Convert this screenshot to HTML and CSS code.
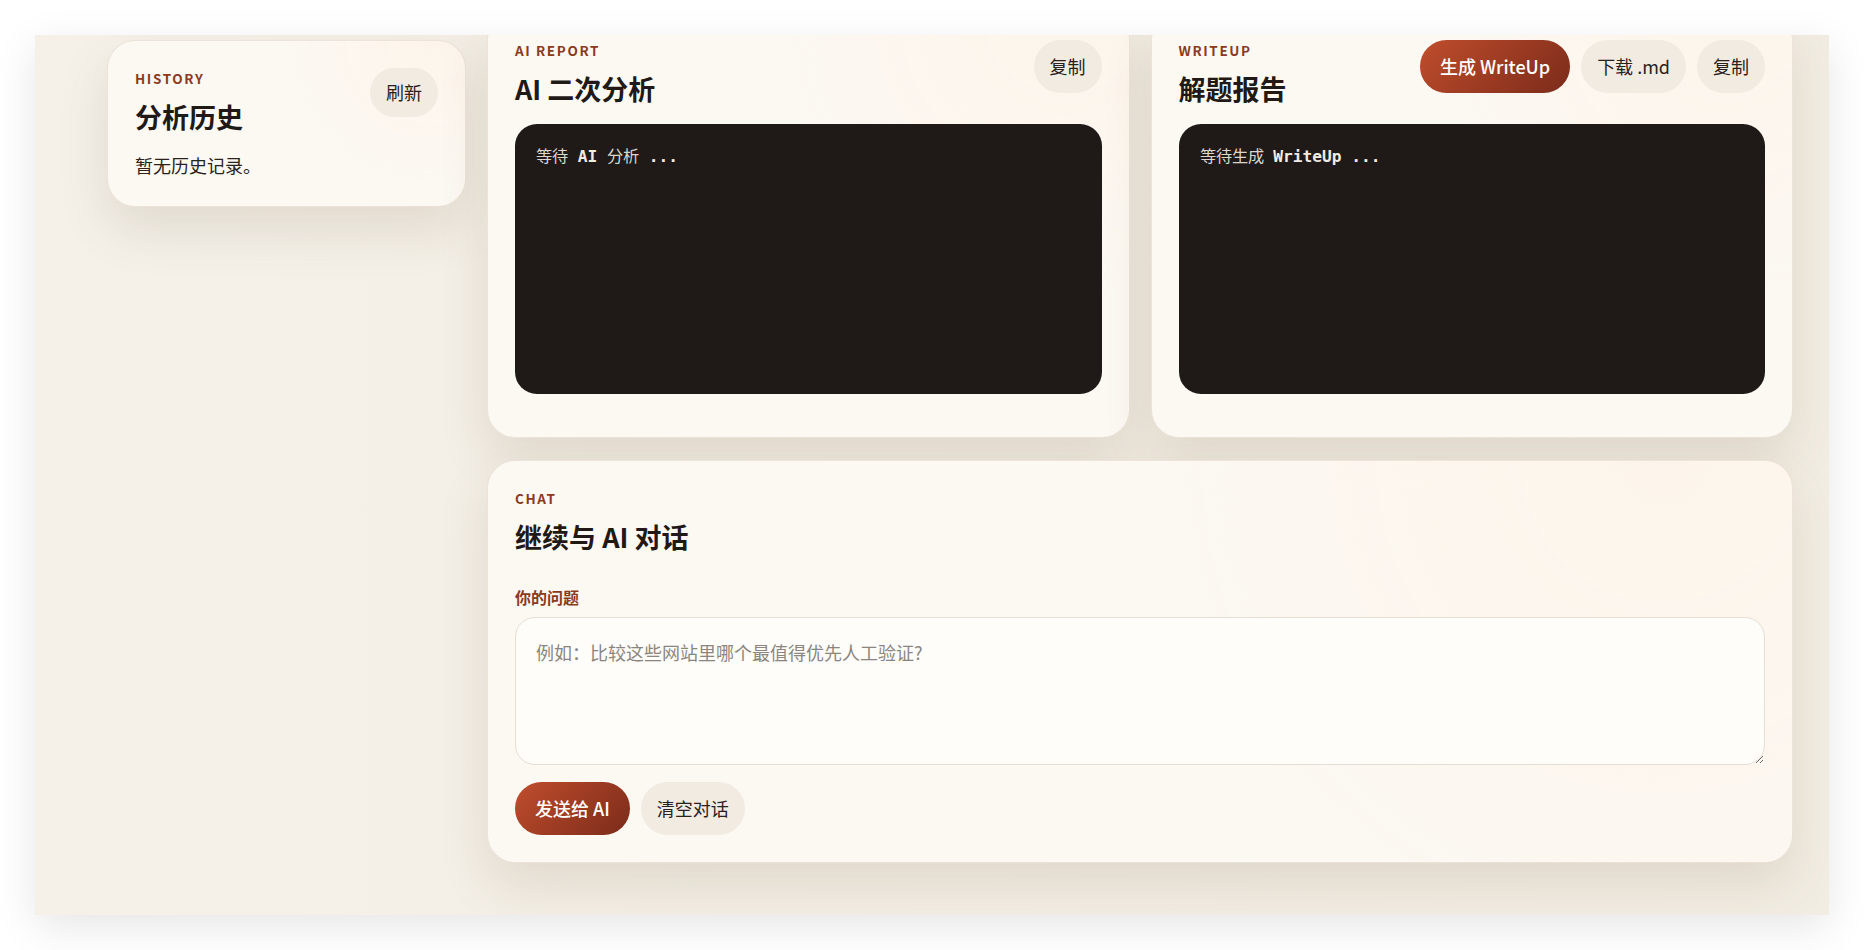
FILE: index.html
```html
<!DOCTYPE html>
<html lang="zh-CN">

<head>
  <meta charset="UTF-8">
  <meta name="viewport" content="width=device-width, initial-scale=1.0">
  <title>AI 分析</title>
  <link rel="stylesheet" href="styles.css">
</head>

<body>

  <div class="frame">
    <div class="layout">

      <!-- Sidebar -->
      <aside class="sidebar">
        <section class="card history-card">
          <div class="card-head">
            <div class="head-text">
              <p class="eyebrow">History</p>
              <h2>分析历史</h2>
            </div>
            <button class="btn btn-sm" id="refreshBtn">刷新</button>
          </div>
          <p class="empty-text">暂无历史记录。</p>
        </section>
      </aside>

      <main class="main">
        <div class="report-grid">

          <!-- AI report -->
          <section class="card report-card">
            <div class="card-head">
              <div class="head-text">
                <p class="eyebrow">AI Report</p>
                <h2>AI 二次分析</h2>
              </div>
              <div class="actions">
                <button class="btn">复制</button>
              </div>
            </div>
            <pre class="output">等待 <strong>AI</strong> 分析 <strong>...</strong></pre>
          </section>

          <!-- Writeup -->
          <section class="card report-card">
            <div class="card-head">
              <div class="head-text">
                <p class="eyebrow">WriteUp</p>
                <h2>解题报告</h2>
              </div>
              <div class="actions">
                <button class="btn btn-primary">生成 WriteUp</button>
                <button class="btn">下载 .md</button>
                <button class="btn">复制</button>
              </div>
            </div>
            <pre class="output">等待生成 <strong>WriteUp</strong> <strong>...</strong></pre>
          </section>

        </div>

        <!-- Chat -->
        <section class="card chat-card">
          <div class="card-head">
            <div class="head-text">
              <p class="eyebrow">Chat</p>
              <h2>继续与 AI 对话</h2>
            </div>
          </div>
          <label class="field-label" for="question">你的问题</label>
          <textarea id="question" placeholder="例如：比较这些网站里哪个最值得优先人工验证?"></textarea>
          <div class="chat-actions">
            <button class="btn btn-primary">发送给 AI</button>
            <button class="btn">清空对话</button>
          </div>
        </section>
      </main>

    </div>
  </div>

</body>

</html>
```

FILE: styles.css
```css
* {
  margin: 0;
  padding: 0;
  box-sizing: border-box;
}

body {
  background-color: #ffffff;
  padding: 35px;
  font-family: "Noto Sans CJK SC", "Noto Sans", sans-serif;
  color: #231b17;
}

/* Scrolled page panel */
.frame {
  height: 880px;
  overflow: hidden;
  background: linear-gradient(90deg, #f5f1e9 0%, #f3eee5 40%, #f2ede3 100%);
  box-shadow: 0 12px 40px rgba(0, 0, 0, 0.1);
}

.layout {
  display: grid;
  grid-template-columns: 359px 1fr;
  gap: 21px;
  padding: 0 36px 0 72px;
  align-items: start;
}

.sidebar {
  margin-top: 5px;
}

.main {
  margin-top: -23px;
  display: flex;
  flex-direction: column;
  gap: 22px;
}

.report-grid {
  display: grid;
  grid-template-columns: 1fr 1fr;
  gap: 21px;
}

/* Cards */
.card {
  background:
    radial-gradient(circle at 90% 0%, rgba(253, 242, 228, 0.5), rgba(253, 242, 228, 0) 40%),
    #fcf8f2;
  border: 1px solid rgba(130, 95, 60, 0.13);
  border-radius: 28px;
  padding: 27px;
  box-shadow: 0 22px 50px rgba(96, 68, 40, 0.13);
}

.card-head {
  display: flex;
  justify-content: space-between;
  align-items: flex-start;
  gap: 16px;
}

.head-text {
  padding-top: 2px;
}

.eyebrow {
  font-size: 13.5px;
  line-height: 17px;
  font-weight: 700;
  letter-spacing: 0.12em;
  text-transform: uppercase;
  color: #8b3a22;
}

.card h2 {
  margin-top: 12px;
  font-size: 27px;
  line-height: 35px;
  font-weight: 700;
  color: #211915;
}

.history-card {
  padding-bottom: 26px;
}

.empty-text {
  margin-top: 17px;
  font-size: 18px;
  line-height: 29px;
  color: #2b221d;
}

.report-card {
  padding-bottom: 43px;
}

.output {
  margin-top: 18px;
  height: 270px;
  background-color: #1f1a17;
  border-radius: 22px;
  padding: 20px 21px;
  color: #ddd5cc;
  font-family: "DejaVu Sans Mono", monospace;
  font-size: 16.2px;
  line-height: 1.6;
  white-space: pre-wrap;
}

.output strong {
  color: #f1ebe4;
  font-weight: 700;
}

/* Buttons */
.actions {
  display: flex;
  gap: 11px;
}

.btn {
  border: none;
  border-radius: 999px;
  background-color: #f1ebe2;
  color: #2a211c;
  font-family: inherit;
  font-size: 18px;
  line-height: 27px;
  padding: 13px 16px;
  white-space: nowrap;
  cursor: pointer;
}

.btn-sm {
  padding: 11px 16px;
}

.btn-primary {
  background: linear-gradient(135deg, #c04e2d 0%, #9a3a22 55%, #7a2c1b 100%);
  color: #fff;
  font-weight: 500;
  padding: 13px 20px;
}

/* Chat */
.field-label {
  display: block;
  margin-top: 32px;
  font-size: 16px;
  line-height: 22px;
  font-weight: 700;
  color: #8b3a22;
}

.chat-card textarea {
  display: block;
  width: 100%;
  height: 148px;
  margin-top: 9px;
  padding: 20px;
  border: 1px solid #e6ddd3;
  border-radius: 20px;
  background-color: #fffdfa;
  font-family: inherit;
  font-size: 18px;
  line-height: 1.6;
  color: #2b221d;
  resize: vertical;
  outline: none;
}

.chat-card textarea::placeholder {
  color: #8b8580;
}

.chat-actions {
  display: flex;
  gap: 11px;
  margin-top: 17px;
}
```
